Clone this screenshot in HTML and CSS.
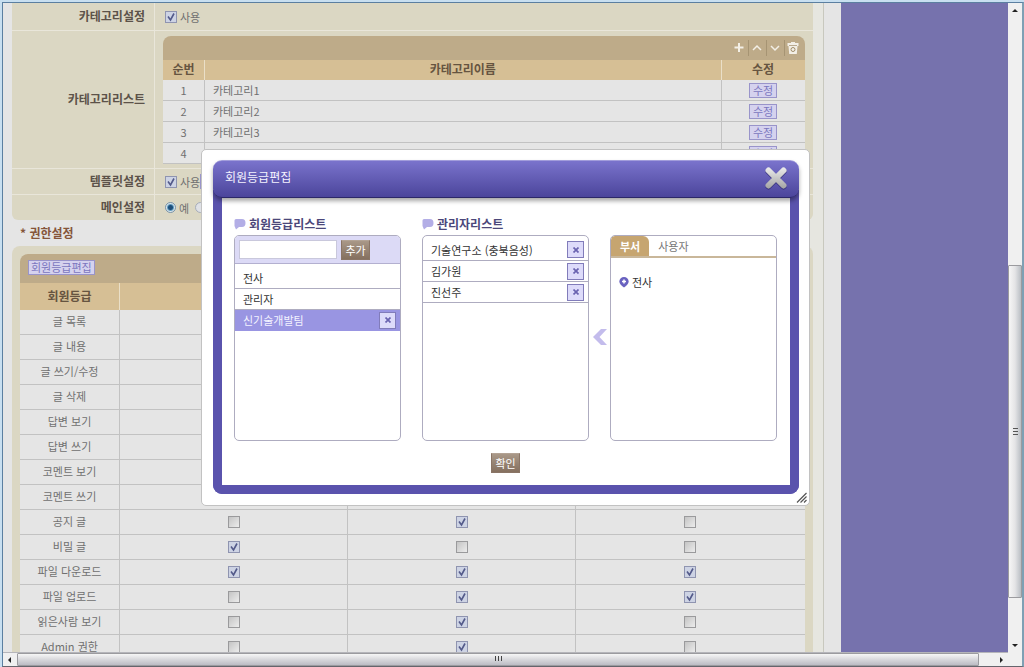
FILE: index.html
```html
<!DOCTYPE html>
<html lang="ko">
<head>
<meta charset="utf-8">
<title>권한설정</title>
<link rel="stylesheet" href="styles.css">
</head>
<body>
<div class="window">
  <div class="viewport">
    <main class="page">
      <div class="content">
        <section class="settings">
          <div class="setting setting-first">
            <div class="setting-label">카테고리설정</div>
            <div class="setting-value"><label class="option"><input class="check" type="checkbox" checked>사용</label></div>
          </div>
          <div class="setting setting-list">
            <div class="setting-label">카테고리리스트</div>
            <div class="setting-value">
              <div class="grid-box">
                <div class="toolbar">
                  <button class="tool" type="button" aria-label="추가"><svg width="12" height="12" viewBox="0 0 12 12"><path d="M6 1v9M1.500 5.500h9" stroke="#f3efe6" stroke-width="2"/></svg></button>
                  <button class="tool" type="button" aria-label="위로"><svg width="12" height="12" viewBox="0 0 12 12"><path d="M2 8l4-4 4 4" fill="none" stroke="#f3efe6" stroke-width="1.500"/></svg></button>
                  <button class="tool" type="button" aria-label="아래로"><svg width="12" height="12" viewBox="0 0 12 12"><path d="M2 4l4 4 4-4" fill="none" stroke="#f3efe6" stroke-width="1.500"/></svg></button>
                  <button class="tool" type="button" aria-label="삭제"><svg width="12" height="12" viewBox="0 0 12 12"><path d="M4 0h4v1h3.500v3H.5V1H4zM1.500 4h9l-.7 8H2.200z" fill="#f3efe6"/><circle cx="6" cy="7.500" r="2" fill="none" stroke="#a08c68"/><path d="M2 3.500h8" stroke="#a08c68" stroke-width=".7"/></svg></button>
                </div>
                <table class="table category">
                  <thead><tr><th class="col-no">순번</th><th>카테고리이름</th><th class="col-edit">수정</th></tr></thead>
                  <tbody>
                    <tr><td>1</td><td class="name">카테고리1</td><td><button class="mini" type="button">수정</button></td></tr>
                    <tr><td>2</td><td class="name">카테고리2</td><td><button class="mini" type="button">수정</button></td></tr>
                    <tr><td>3</td><td class="name">카테고리3</td><td><button class="mini" type="button">수정</button></td></tr>
                    <tr><td>4</td><td class="name"></td><td><button class="mini" type="button">수정</button></td></tr>
                  </tbody>
                </table>
              </div>
            </div>
          </div>
          <div class="setting">
            <div class="setting-label">템플릿설정</div>
            <div class="setting-value"><label class="option"><input class="check" type="checkbox" checked>사용</label><button class="mini" type="button" aria-label="템플릿"></button></div>
          </div>
          <div class="setting setting-last">
            <div class="setting-label">메인설정</div>
            <div class="setting-value"><label class="option"><input class="radio" type="radio" name="main" checked>예</label><input class="radio" type="radio" name="main" aria-label="아니오"></div>
          </div>
        </section>

        <h2 class="heading">* 권한설정</h2>

        <section class="rights">
          <div class="grid-box">
            <div class="toolbar toolbar-rights"><button class="mini" type="button">회원등급편집</button></div>
            <table class="table permission">
              <thead><tr><th class="col-right">회원등급</th><th></th><th></th><th></th></tr></thead>
              <tbody>
                <tr><th scope="row">글 목록</th><td></td><td></td><td></td></tr>
                <tr><th scope="row">글 내용</th><td></td><td></td><td></td></tr>
                <tr><th scope="row">글 쓰기/수정</th><td></td><td></td><td></td></tr>
                <tr><th scope="row">글 삭제</th><td></td><td></td><td></td></tr>
                <tr><th scope="row">답변 보기</th><td></td><td></td><td></td></tr>
                <tr><th scope="row">답변 쓰기</th><td></td><td></td><td></td></tr>
                <tr><th scope="row">코멘트 보기</th><td></td><td></td><td></td></tr>
                <tr><th scope="row">코멘트 쓰기</th><td></td><td></td><td></td></tr>
                <tr><th scope="row">공지 글</th><td><input class="check" type="checkbox" aria-label="공지 글, 전사"></td><td><input class="check" type="checkbox" aria-label="공지 글, 관리자" checked></td><td><input class="check" type="checkbox" aria-label="공지 글, 신기술개발팀"></td></tr>
                <tr><th scope="row">비밀 글</th><td><input class="check" type="checkbox" aria-label="비밀 글, 전사" checked></td><td><input class="check" type="checkbox" aria-label="비밀 글, 관리자"></td><td><input class="check" type="checkbox" aria-label="비밀 글, 신기술개발팀"></td></tr>
                <tr><th scope="row">파일 다운로드</th><td><input class="check" type="checkbox" aria-label="파일 다운로드, 전사" checked></td><td><input class="check" type="checkbox" aria-label="파일 다운로드, 관리자" checked></td><td><input class="check" type="checkbox" aria-label="파일 다운로드, 신기술개발팀" checked></td></tr>
                <tr><th scope="row">파일 업로드</th><td><input class="check" type="checkbox" aria-label="파일 업로드, 전사"></td><td><input class="check" type="checkbox" aria-label="파일 업로드, 관리자" checked></td><td><input class="check" type="checkbox" aria-label="파일 업로드, 신기술개발팀" checked></td></tr>
                <tr><th scope="row">읽은사람 보기</th><td><input class="check" type="checkbox" aria-label="읽은사람 보기, 전사"></td><td><input class="check" type="checkbox" aria-label="읽은사람 보기, 관리자" checked></td><td><input class="check" type="checkbox" aria-label="읽은사람 보기, 신기술개발팀"></td></tr>
                <tr><th scope="row">Admin 권한</th><td><input class="check" type="checkbox" aria-label="Admin 권한, 전사"></td><td><input class="check" type="checkbox" aria-label="Admin 권한, 관리자" checked></td><td><input class="check" type="checkbox" aria-label="Admin 권한, 신기술개발팀"></td></tr>
              </tbody>
            </table>
          </div>
        </section>
      </div>
    </main>
    <aside class="side"></aside>
  </div>

  <div class="scroll scroll-v" aria-hidden="true">
    <svg class="arrow" width="14" height="14" viewBox="0 0 14 14"><path d="M4 9h6L7 6z" fill="#222"/></svg>
    <div class="track-before"></div>
    <div class="thumb"><svg width="7" height="7" viewBox="0 0 7 7"><path d="M1 .5h5M1 3.500h5M1 6.500h5" stroke="#555"/></svg></div>
    <div class="track-after"></div>
    <svg class="arrow" width="14" height="14" viewBox="0 0 14 14"><path d="M4 6h6L7 9z" fill="#222"/></svg>
  </div>
  <div class="scroll scroll-h" aria-hidden="true">
    <svg class="arrow" width="14" height="14" viewBox="0 0 14 14"><path d="M8 4v6L5 7z" fill="#222"/></svg>
    <div class="thumb"><svg width="7" height="7" viewBox="0 0 7 7"><path d="M.5 0v5M3.500 0v5M6.500 0v5" stroke="#444"/></svg></div>
    <div class="track-after"></div>
    <svg class="arrow" width="14" height="14" viewBox="0 0 14 14"><path d="M6 4v6l3-3z" fill="#222"/></svg>
  </div>
  <div class="corner"></div>
</div>

<div class="dialog" role="dialog" aria-labelledby="dialog-title">
  <header class="dialog-head">
    <h1 class="dialog-title" id="dialog-title">회원등급편집</h1>
    <button class="close" type="button" aria-label="닫기">
      <svg width="24" height="26" viewBox="0 0 24 26">
        <defs><linearGradient id="steel" gradientUnits="userSpaceOnUse" x1="0" y1="2" x2="0" y2="24"><stop offset="0" stop-color="#ededed"/><stop offset="1" stop-color="#a2a2a2"/></linearGradient></defs>
        <path d="M4.500 6.500l15 15M19.500 6.500l-15 15" stroke="#37337c" stroke-width="6" stroke-linecap="round"/>
        <path d="M4.500 5.500l15 15M19.500 5.500l-15 15" stroke="url(#steel)" stroke-width="6" stroke-linecap="round"/>
      </svg>
    </button>
  </header>
  <div class="dialog-body">
    <div class="columns">
      <section class="column">
        <h3 class="list-title"><svg width="12" height="12" viewBox="0 0 12 12"><path d="M2 1h6q3.500 0 3.500 4T8 9H5l-3 2.500L.5 8V2.500Q.5 1 2 1z" fill="#b3aee6"/></svg>회원등급리스트</h3>
        <div class="panel">
          <form class="add">
            <input class="add-input" type="text" aria-label="회원등급">
            <button class="brown" type="button">추가</button>
          </form>
          <ul class="items">
            <li class="item item-tall">전사</li>
            <li class="item">관리자</li>
            <li class="item item-selected">신기술개발팀<button class="remove" type="button" aria-label="삭제"><svg width="6" height="6" viewBox="0 0 6 6"><path d="M.5.5l5 5M5.500.5l-5 5" stroke="#6a63b0" stroke-width="1.700"/></svg></button></li>
          </ul>
        </div>
      </section>
      <div class="gap"></div>
      <section class="column">
        <h3 class="list-title"><svg width="12" height="12" viewBox="0 0 12 12"><path d="M2 1h6q3.500 0 3.500 4T8 9H5l-3 2.500L.5 8V2.500Q.5 1 2 1z" fill="#b3aee6"/></svg>관리자리스트</h3>
        <div class="panel">
          <ul class="items">
            <li class="item item-tall">기술연구소 (충북음성)<button class="remove" type="button" aria-label="삭제"><svg width="6" height="6" viewBox="0 0 6 6"><path d="M.5.5l5 5M5.500.5l-5 5" stroke="#6a63b0" stroke-width="1.700"/></svg></button></li>
            <li class="item">김가원<button class="remove" type="button" aria-label="삭제"><svg width="6" height="6" viewBox="0 0 6 6"><path d="M.5.5l5 5M5.500.5l-5 5" stroke="#6a63b0" stroke-width="1.700"/></svg></button></li>
            <li class="item">진선주<button class="remove" type="button" aria-label="삭제"><svg width="6" height="6" viewBox="0 0 6 6"><path d="M.5.5l5 5M5.500.5l-5 5" stroke="#6a63b0" stroke-width="1.700"/></svg></button></li>
          </ul>
        </div>
      </section>
      <button class="move" type="button" aria-label="관리자로 추가"><svg width="14" height="16" viewBox="0 0 14 16"><path d="M8 0h6L6.500 8l7.500 8H8L0 8z" fill="#c3bcec"/></svg></button>
      <section class="column">
        <div class="list-title"></div>
        <div class="panel">
          <div class="tabs"><button class="tab tab-active" type="button">부서</button><button class="tab" type="button">사용자</button></div>
          <div class="tree"><svg width="10" height="12" viewBox="0 0 10 12"><path d="M5 1a4.700 4.700 0 0 1 4.700 4.500Q9.500 8.500 5 11.500.5 8.500.3 5.500A4.700 4.700 0 0 1 5 1z" fill="#6962c0"/><path d="M5 3.500v4M3 5.500h4" stroke="#fff" stroke-width="1.500"/></svg>전사</div>
        </div>
      </section>
    </div>
    <div class="actions"><button class="brown" type="button">확인</button></div>
  </div>
  <svg class="grip" width="12" height="12" viewBox="0 0 12 12"><path d="M1 10.500L10.500 1M4.500 10.500l6-6M8 10.500L10.500 8" stroke="#555" stroke-width="1.200"/></svg>
</div>
</body>
</html>
```

FILE: styles.css
```css
* { box-sizing: border-box; }

body {
  height: 100vh;
  margin: 0;
  padding: 2px 0 0 2px;
  overflow: hidden;
  font: 11px/16px "Noto Sans CJK KR", sans-serif;
  color: #707070;
  background: #c8dff0;
}

h1, h2, h3, ul { margin: 0; padding: 0; }
ul { list-style: none; }
svg { display: block; flex: none; }
button { margin: 0; padding: 0; border: 0; background: none; font: inherit; color: inherit; }

/* Browser window frame */
.window {
  display: grid;
  grid-template: minmax(0, 1fr) 14px / minmax(0, 1fr) 14px;
  height: 100%;
  border: 1px solid;
  border-right-width: 2px;
  border-color: #5b7fa0 #7ea0b4 #65656d #5b7fa0;
}

.viewport {
  display: grid;
  grid-template-columns: 5fr 1fr;
  overflow: hidden;
  background: #e5e5e5;
}
.side { background: #7672ad; }
.page { display: flex; padding-right: 17px; min-width: 0; }
.content {
  flex: 1;
  padding: 0 10px 0 9px;
  border-right: 1px solid #c8c8be;
  background: linear-gradient(to right, #e5e5e5 50%, #e6e6e0 50%);
}

/* Settings rows */
.settings { border-radius: 0 0 6px 6px; background: #dbd7c3; }
.setting {
  display: grid;
  grid-template-columns: 143px minmax(0, 1fr);
  height: 26px;
  border-bottom: 1px solid #e9e6da;
}
.setting-first { height: 28px; }
.setting-list { height: auto; }
.setting-last { height: 25px; border-bottom: 0; }
.setting-label {
  display: flex;
  align-items: center;
  justify-content: flex-end;
  padding: 0 9px 1px 0;
  border-right: 1px solid #e9e6da;
  font-size: 12px;
  font-weight: bold;
  color: #5c5249;
}
.setting-value { display: flex; align-items: center; padding-left: 8px; }
.setting-list .setting-value { padding: 5px 8px 4px; }
.option { display: flex; align-items: center; gap: 3px; padding-left: 2px; }
.option + .radio { margin-left: 6px; }

.check {
  appearance: none;
  display: block;
  width: 12px;
  height: 12px;
  margin: 0 auto;
  border: 1px solid #9a9a9c;
  background: linear-gradient(135deg, #c4c4c4, #ececec);
}
.check:checked {
  border-color: #8f94b0;
  background: url("data:image/svg+xml,%3Csvg xmlns='http://www.w3.org/2000/svg' viewBox='0 0 10 10'%3E%3Cpath d='M2 4.500L4.500 8 8 1.500' fill='none' stroke='%23535a8a' stroke-width='1.600'/%3E%3C/svg%3E") #cdd3e4;
}
.radio {
  appearance: none;
  width: 11px;
  height: 11px;
  margin: 0;
  border: 1px solid #a6adba;
  border-radius: 50%;
  background: #dfe1e6;
}
.radio:checked {
  border-color: #7893a8;
  background: radial-gradient(circle, #1f4f7a 0 2px, #5f9cc0 3px, #dbe5ec 4px);
}

/* Tables */
.grid-box { flex: 1; min-width: 0; overflow: hidden; border-radius: 8px 8px 0 0; }
.toolbar {
  display: flex;
  align-items: center;
  justify-content: flex-end;
  height: 24px;
  padding-right: 3px;
  background: #beab89;
}
.toolbar-rights { justify-content: flex-start; height: 29px; padding: 0 8px 3px; }
.tool {
  display: flex;
  align-items: center;
  justify-content: center;
  width: 18px;
  height: 16px;
  border-left: 1px solid #a69473;
}
.tool:first-child { border-left: 0; }

.table {
  width: 100%;
  table-layout: fixed;
  border-collapse: separate;
  border-spacing: 0;
  background: #e5e5e5;
  text-align: center;
}
.table th, .table td {
  padding: 0;
  border-right: 1px solid #c2c2c2;
  border-bottom: 1px solid #c2c2c2;
}
.table tr > :last-child { border-right: 0; }
.table thead th {
  padding-bottom: 2px;
  border-right-color: #eadfc8;
  border-bottom: 0;
  background: #d6bf95;
  font-size: 12px;
  font-weight: bold;
  color: #665440;
}
.table tbody th { font-weight: normal; }
.category .col-no { width: 42px; }
.category .col-edit { width: 83px; }
.category th { height: 20px; }
.category td { height: 21px; }
.category .name { padding-left: 8px; text-align: left; }
.category .mini { display: block; margin: 0 auto; }
.permission .col-right { width: 100px; }
.permission thead th { height: 27px; }
.permission tbody th, .permission td { height: 25px; }
.permission tbody th { padding-bottom: 2px; }

.mini {
  min-width: 28px;
  height: 15px;
  padding: 0 2px;
  border: 1px solid #9994ca;
  background: #d5d2ee;
  line-height: 12px;
  color: #7b76be;
}

.heading {
  padding: 5px 8px;
  font-size: 12px;
  line-height: 16px;
  color: #85553a;
}
.rights { padding: 8px 8px 0; border-radius: 8px 8px 0 0; background: #dbd7c3; }

/* Scrollbars */
.scroll { display: flex; background: #f0f0f0; }
.scroll-v { flex-direction: column; }
.scroll-h { border-top: 1px solid #b5b5ba; }
.thumb {
  display: flex;
  align-items: center;
  justify-content: center;
  border: 1px solid #9b9b9f;
  border-radius: 1px;
}
.scroll-v .thumb { flex: 332; background: linear-gradient(to right, #f6f6f6, #e4e4e6 50%, #b9bec4); }
.scroll-v .track-before { flex: 249; }
.scroll-v .track-after { flex: 40; }
.scroll-h .thumb { flex: 961; background: linear-gradient(#f6f6f6, #d8d8dc 50%, #bcbcc4); }
.scroll-h .track-after { flex: 15; }
.corner { background: #f0f0f0; }

/* Dialog */
.dialog {
  position: absolute;
  top: 149px;
  left: 201px;
  width: 609px;
  padding: 10px 10px 11px 11px;
  border: 1px solid #c2c2c2;
  border-radius: 5px;
  background: #fff;
}
.dialog-head {
  position: relative;
  display: flex;
  align-items: center;
  justify-content: space-between;
  height: 38px;
  padding: 0 11px 2px 12px;
  border-top: 1px solid #a29ddb;
  border-bottom: 1px solid #2c2868;
  border-radius: 9px;
  background: linear-gradient(#7a73cc, #4b459b);
  box-shadow: 0 3px 4px rgba(0, 0, 0, .35);
}
.dialog-title { padding-bottom: 2px; font-size: 12px; font-weight: normal; color: #f4f3ff; }
.dialog-body {
  margin-top: -8px;
  padding: 24px 13px 12px 12px;
  border: 9px solid #5a53ad;
  border-top: 0;
  border-radius: 0 0 9px 9px;
  background: #fff;
  color: #333;
}
.columns { display: grid; grid-template-columns: minmax(0, 1fr) 21px minmax(0, 1fr) 21px minmax(0, 1fr); }
.list-title {
  display: flex;
  align-items: center;
  gap: 3px;
  height: 21px;
  padding-bottom: 1px;
  font-size: 12px;
  color: #4b477a;
}
.panel {
  height: 206px;
  overflow: hidden;
  border: 1px solid #aeacc0;
  border-radius: 5px;
}
.add {
  display: flex;
  align-items: center;
  gap: 4px;
  height: 28px;
  padding: 0 4px;
  border-bottom: 1px solid #b3b0d0;
  background: #dcdaf6;
}
.add-input { width: 98px; height: 19px; padding: 0 4px; border: 1px solid #c9c8dc; background: #fff; font: inherit; }
.brown {
  width: 29px;
  height: 20px;
  border: 1px solid #8a7566;
  border-top-color: #b3a395;
  background: linear-gradient(#a99888, #85705f);
  line-height: 16px;
  color: #fff;
}
.item {
  display: flex;
  align-items: center;
  justify-content: space-between;
  height: 21px;
  padding: 0 4px 0 8px;
  border-bottom: 1px solid #aeacc0;
}
.item-tall { height: 25px; padding-top: 3px; }
.item-selected { border-color: #9995e2; background: #9995e2; color: #f4f3ff; }
.remove {
  display: flex;
  align-items: center;
  justify-content: center;
  width: 17px;
  height: 17px;
  border: 1px solid #817cba;
  background: #dddbfa;
}
.move { display: flex; align-self: center; justify-content: center; padding-top: 19px; }
.tabs { display: flex; height: 22px; border-bottom: 2px solid #c9b79a; }
.tab { padding: 0 9px; color: #777; }
.tab-active { border-radius: 4px 6px 0 0; background: #c6a570; font-weight: bold; color: #fff; }
.tree { display: flex; align-items: center; gap: 3px; padding: 16px 8px; }
.actions { display: flex; justify-content: center; padding-top: 12px; }
.grip { position: absolute; right: 1px; bottom: 1px; }
```
